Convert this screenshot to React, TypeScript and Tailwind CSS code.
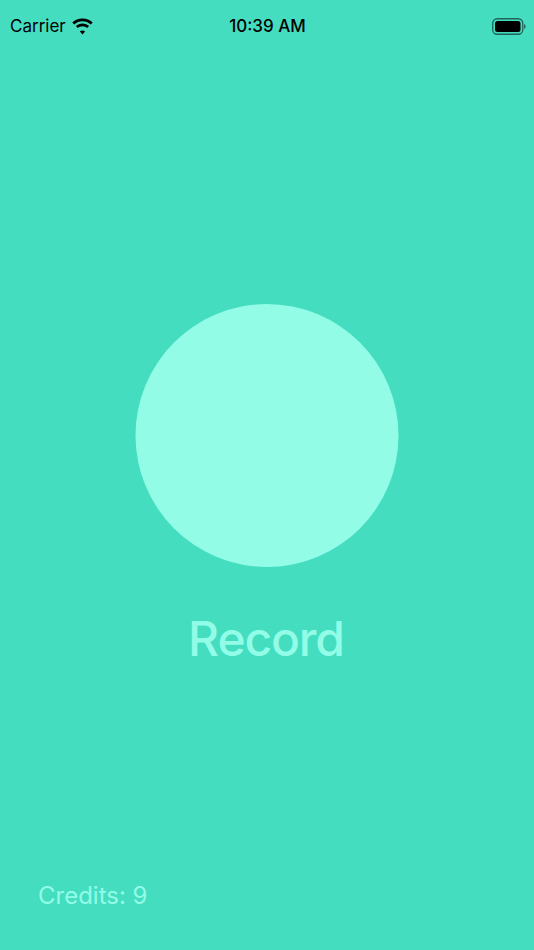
export default function App() {
  return (
    <div className="relative flex h-[950px] w-[534px] flex-col items-center overflow-hidden bg-[#45ddc0] font-['Inter',sans-serif]">
      <div className="flex h-[52px] w-full items-center justify-between pl-[10px] pr-[8px] pt-[1px] text-black">
        <div className="flex w-[150px] items-center gap-[6px]">
          <span className="text-[17px] tracking-[0px]">Carrier</span>
          <svg width="23" height="17" viewBox="0 0 22 17" className="-ml-[1px]"><path d="M11 3.200c3.200 0 6.100 1.200 8.300 3.300l1.900-2C18.500 1.900 14.900.4 11 .4S3.500 1.900.8 4.500l1.900 2C4.900 4.400 7.800 3.200 11 3.200zm0 5c1.800 0 3.400.7 4.700 1.800l1.900-2C15.800 6.400 13.500 5.400 11 5.400S6.200 6.400 4.400 8l1.900 2C7.600 8.900 9.200 8.200 11 8.200zm0 4.300c-1 0-1.900.4-2.600 1L11 16.400l2.600-2.900c-.7-.6-1.600-1-2.600-1z" fill="#000"/></svg>
        </div>
        <span className="-ml-[1px] text-[17px] font-medium tracking-[0px]">10:39 AM</span>
        <div className="flex w-[150px] justify-end">
          <svg width="34" height="17" viewBox="0 0 34 17"><rect x=".75" y=".75" width="30" height="15.500" rx="4.500" fill="none" stroke="#000" strokeOpacity=".55" strokeWidth="1.300"/><rect x="3" y="3" width="25.500" height="11" rx="2.500" fill="#000"/><path d="M32 6v5c1-.3 1.700-1.300 1.700-2.500S33 6.300 32 6z" fill="#000" fillOpacity=".5"/></svg>
        </div>
      </div>
      <div className="mt-[252px] h-[263px] w-[263px] -translate-x-[0.5px] rounded-full bg-[#92fce7]" />
      <div className="mt-[42px] -ml-[2px] text-[48px] leading-[60px] font-medium tracking-[-1.15px] text-[#92fce7]">Record</div>
      <div className="mt-auto mb-[38px] self-start pl-[38px] text-[24px] leading-[32px] text-[#92fce7]">Credits: 9</div>
    </div>
  );
}
